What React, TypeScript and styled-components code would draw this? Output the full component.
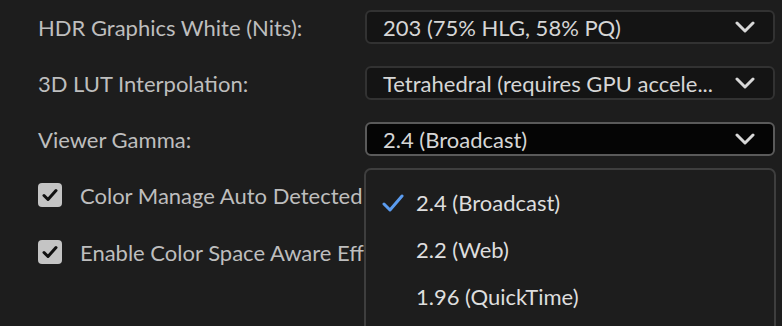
import styled, { createGlobalStyle } from "styled-components";

const GlobalStyle = createGlobalStyle`
  html, body {
    margin: 0;
    padding: 0;
    background: #1d1d1d;
  }
  body {
    font-family: "Lato", "Open Sans", sans-serif;
  }
`;

const Page = styled.div`
  width: 782px;
  height: 326px;
  overflow: hidden;
  background: #1d1d1d;
  padding: 10px 7px 0 38px;
  box-sizing: border-box;
`;

const Content = styled.div`
  position: relative;
`;

const Row = styled.div`
  display: flex;
  align-items: center;
  height: 34px;
  margin-bottom: 22px;
  position: relative;
`;

const Label = styled.div`
  width: 327px;
  color: #bebebe;
  font-size: 22px;
`;

const Select = styled.div<{ $open?: boolean }>`
  flex: 1;
  height: 34px;
  box-sizing: border-box;
  display: flex;
  align-items: center;
  justify-content: space-between;
  padding: 0 18px 0 16px;
  border-radius: 6px;
  border: 2px solid ${(p) => (p.$open ? "#5a5a5a" : "#323232")};
  background: ${(p) => (p.$open ? "#050505" : "#141414")};
  color: #d6d6d6;
  font-size: 22px;
  white-space: nowrap;
`;

const Chevron = () => (
  <svg width="20" height="12" viewBox="0 0 20 12">
    <path
      d="M2 2 L10 10 L18 2"
      fill="none"
      stroke="#d8d8d8"
      strokeWidth="3"
      strokeLinecap="round"
      strokeLinejoin="round"
    />
  </svg>
);

const CheckRow = styled.div`
  display: flex;
  align-items: center;
  height: 34px;
  margin-bottom: 23px;
`;

const Box = styled.div`
  width: 24px;
  height: 24px;
  border-radius: 4px;
  background: #c4c4c4;
  display: flex;
  align-items: center;
  justify-content: center;
  margin-right: 18px;
`;

const CheckText = styled.div`
  width: 284px;
  overflow: hidden;
  color: #bebebe;
  font-size: 22px;
  white-space: nowrap;
`;

const Menu = styled.div`
  position: absolute;
  left: 326px;
  top: 46px;
  width: 412px;
  height: 200px;
  box-sizing: border-box;
  border: 2px solid #3e3e3e;
  border-radius: 7px;
  background: #1d1d1d;
  padding-top: 9px;
  z-index: 2;
`;

const MenuItem = styled.div`
  display: flex;
  align-items: center;
  height: 47px;
  color: #dedede;
  font-size: 22px;
`;

const Tick = styled.div`
  width: 50px;
  padding-left: 16px;
  box-sizing: border-box;
  display: flex;
  align-items: center;
`;

const BoxCheck = () => (
  <svg width="16" height="14" viewBox="0 0 16 14">
    <path
      d="M2 7.5 L6 11.5 L14 2.5"
      fill="none"
      stroke="#111"
      strokeWidth="3"
      strokeLinecap="round"
      strokeLinejoin="round"
    />
  </svg>
);

const gammaOptions = ["2.4 (Broadcast)", "2.2 (Web)", "1.96 (QuickTime)"];

const App = () => {
  return (
    <>
      <GlobalStyle />
      <Page>
        <Content>
          <Row>
            <Label>HDR Graphics White (Nits):</Label>
            <Select>
              <span>203 (75% HLG, 58% PQ)</span>
              <Chevron />
            </Select>
          </Row>
          <Row>
            <Label>3D LUT Interpolation:</Label>
            <Select>
              <span>Tetrahedral (requires GPU accele...</span>
              <Chevron />
            </Select>
          </Row>
          <Row>
            <Label>Viewer Gamma:</Label>
            <Select $open>
              <span>2.4 (Broadcast)</span>
              <Chevron />
            </Select>
            <Menu>
              {gammaOptions.map((opt, i) => (
                <MenuItem key={opt}>
                  <Tick>
                    {i === 0 && (
                      <svg width="22" height="18" viewBox="0 0 22 18">
                        <path
                          d="M2 10 L8 16 L20 2"
                          fill="none"
                          stroke="#5b9cf0"
                          strokeWidth="3"
                          strokeLinecap="round"
                          strokeLinejoin="round"
                        />
                      </svg>
                    )}
                  </Tick>
                  {opt}
                </MenuItem>
              ))}
            </Menu>
          </Row>
          <CheckRow>
            <Box>
              <BoxCheck />
            </Box>
            <CheckText>Color Manage Auto Detected Log Video</CheckText>
          </CheckRow>
          <CheckRow>
            <Box>
              <BoxCheck />
            </Box>
            <CheckText>Enable Color Space Aware Effects</CheckText>
          </CheckRow>
        </Content>
      </Page>
    </>
  );
};

export default App;
